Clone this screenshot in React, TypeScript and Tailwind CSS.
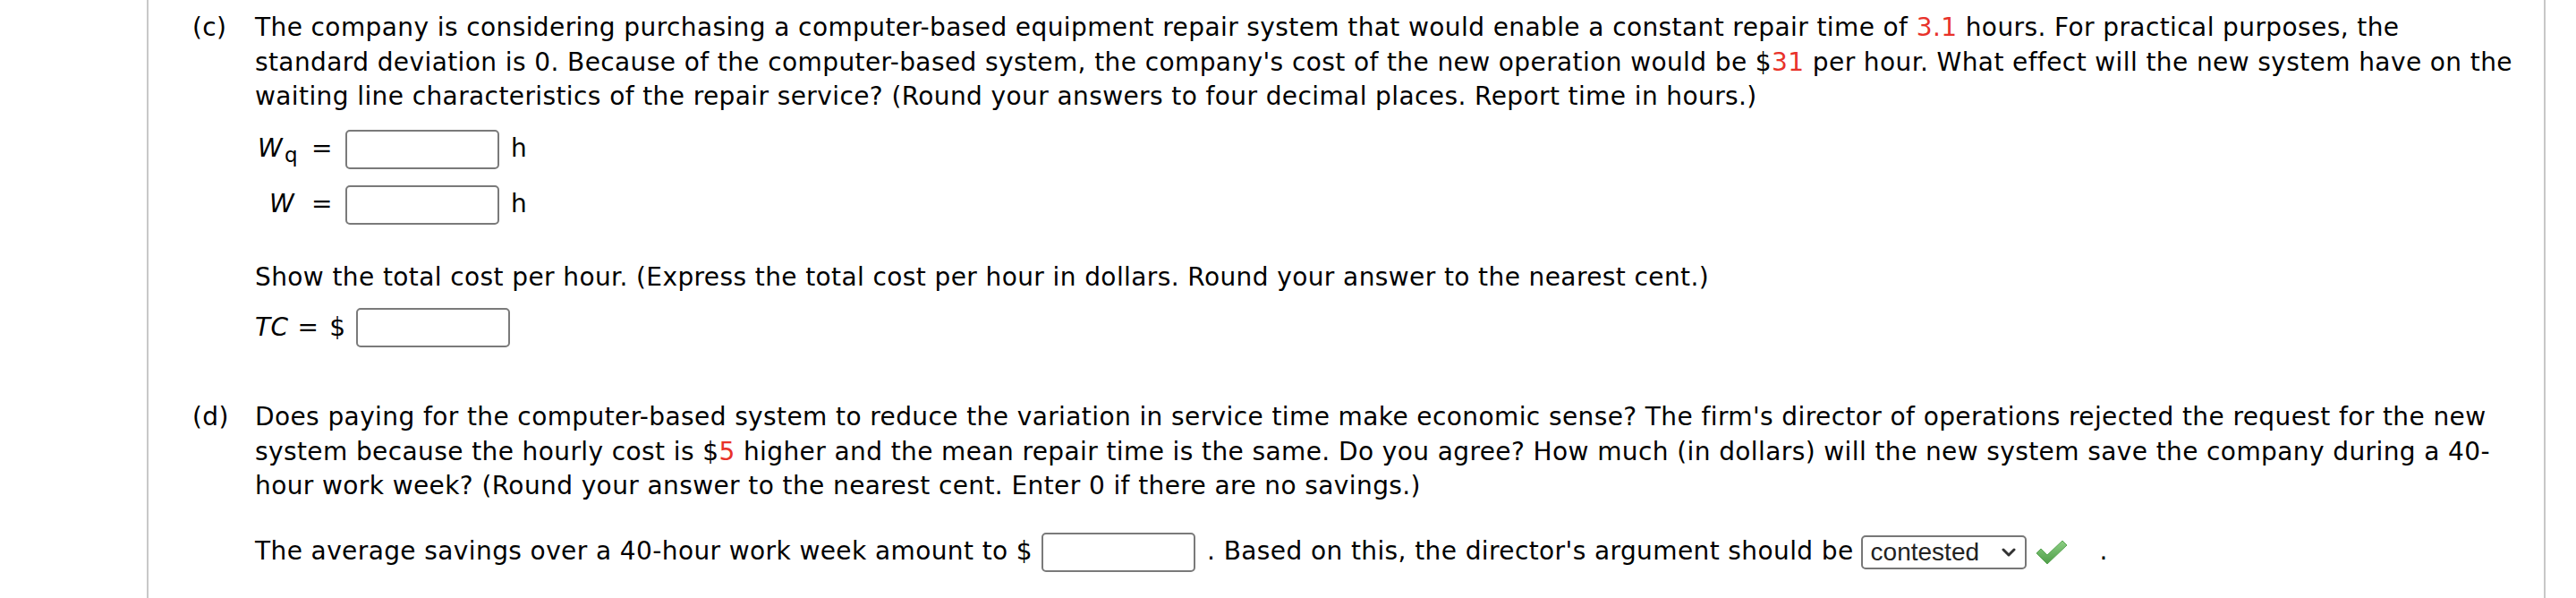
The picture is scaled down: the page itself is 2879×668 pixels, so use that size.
const red = "text-[#e8322a]";

function Box({ className = "" }: { className?: string }) {
  return (
    <span
      className={
        "inline-block w-[172px] h-[44px] border-2 border-[#7a7a7a] rounded-[5px] bg-white shrink-0 " +
        className
      }
    />
  );
}

function Check() {
  return (
    <svg width="36" height="28" viewBox="0 0 36 28" className="shrink-0">
      <defs>
        <linearGradient id="ck" x1="0" y1="0" x2="0" y2="1">
          <stop offset="0" stopColor="#8ccf84" />
          <stop offset="1" stopColor="#4f9d48" />
        </linearGradient>
      </defs>
      <path
        d="M1 15 L6 10 L13 17 L30 1 L35 6 L13 27 Z"
        fill="url(#ck)"
        stroke="#5aa653"
        strokeWidth="1"
        strokeLinejoin="round"
      />
    </svg>
  );
}

export default function App() {
  return (
    <div className="w-[2879px] h-[668px] bg-white text-black font-['DejaVu_Sans',Verdana,sans-serif] text-[28px] tracking-[0.4px] leading-[38.5px] overflow-hidden">
      <div className="ml-[164px] w-[2681px] h-full border-x-2 border-[#c8c8c8] pl-[49px] pt-[12px]">
        {/* part (c) */}
        <div className="flex">
          <div className="w-[70px] shrink-0">(c)</div>
          <div className="whitespace-nowrap">
            The company is considering purchasing a computer-based equipment repair system that would enable a constant repair time of{" "}
            <span className={red}>3.1</span> hours. For practical purposes, the
            <br />
            standard deviation is 0. Because of the computer-based system, the company's cost of the new operation would be $
            <span className={red}>31</span> per hour. What effect will the new system have on the
            <br />
            waiting line characteristics of the repair service? (Round your answers to four decimal places. Report time in hours.)
          </div>
        </div>

        <div className="pl-[70px]">
          <div className="mt-[17px] flex items-center h-[44px]">
            <span className="w-[48px] text-right italic">
              W<sub className="not-italic text-[23px] relative top-[6px] ml-[2px]">q</sub>
            </span>
            <span className="ml-[15px] w-[38px]">=</span>
            <Box />
            <span className="ml-[13px]">h</span>
          </div>
          <div className="mt-[18px] flex items-center h-[44px]">
            <span className="w-[48px] text-right italic pr-[4px]">W</span>
            <span className="ml-[15px] w-[38px]">=</span>
            <Box />
            <span className="ml-[13px]">h</span>
          </div>

          <div className="mt-[40px]">
            Show the total cost per hour. (Express the total cost per hour in dollars. Round your answer to the nearest cent.)
          </div>
          <div className="mt-[15px] flex items-center h-[44px]">
            <span className="italic">TC</span>
            <span className="ml-[10px]">=</span>
            <span className="ml-[12px]">$</span>
            <Box className="ml-[11px]" />
          </div>
        </div>

        {/* part (d) */}
        <div className="flex mt-[59px]">
          <div className="w-[70px] shrink-0">(d)</div>
          <div className="whitespace-nowrap">
            Does paying for the computer-based system to reduce the variation in service time make economic sense? The firm's director of operations rejected the request for the new
            <br />
            system because the hourly cost is $<span className={red}>5</span> higher and the mean repair time is the same. Do you agree? How much (in dollars) will the new system save the company during a 40-
            <br />
            hour work week? (Round your answer to the nearest cent. Enter 0 if there are no savings.)
          </div>
        </div>

        <div className="pl-[70px] mt-[32px] flex items-center h-[44px] whitespace-nowrap">
          <span>The average savings over a 40-hour work week amount to $</span>
          <Box className="ml-[10px]" />
          <span className="ml-[13px]">. Based on this, the director's argument should be</span>
          <span className="ml-[8px] w-[185px] h-[38px] border-2 border-[#777] rounded-[5px] flex items-center pl-[9px] pr-[10px] font-['Liberation_Sans',Arial,sans-serif] text-[28px] tracking-normal text-[#222] shrink-0">
            <span className="flex-1 leading-none">contested</span>
            <svg width="16" height="12" viewBox="0 0 16 12">
              <path d="M2 3 L8 9 L14 3" fill="none" stroke="#333" strokeWidth="3" strokeLinecap="round" strokeLinejoin="round" />
            </svg>
          </span>
          <span className="ml-[10px]">
            <Check />
          </span>
          <span className="ml-[36px]">.</span>
        </div>
      </div>
    </div>
  );
}
